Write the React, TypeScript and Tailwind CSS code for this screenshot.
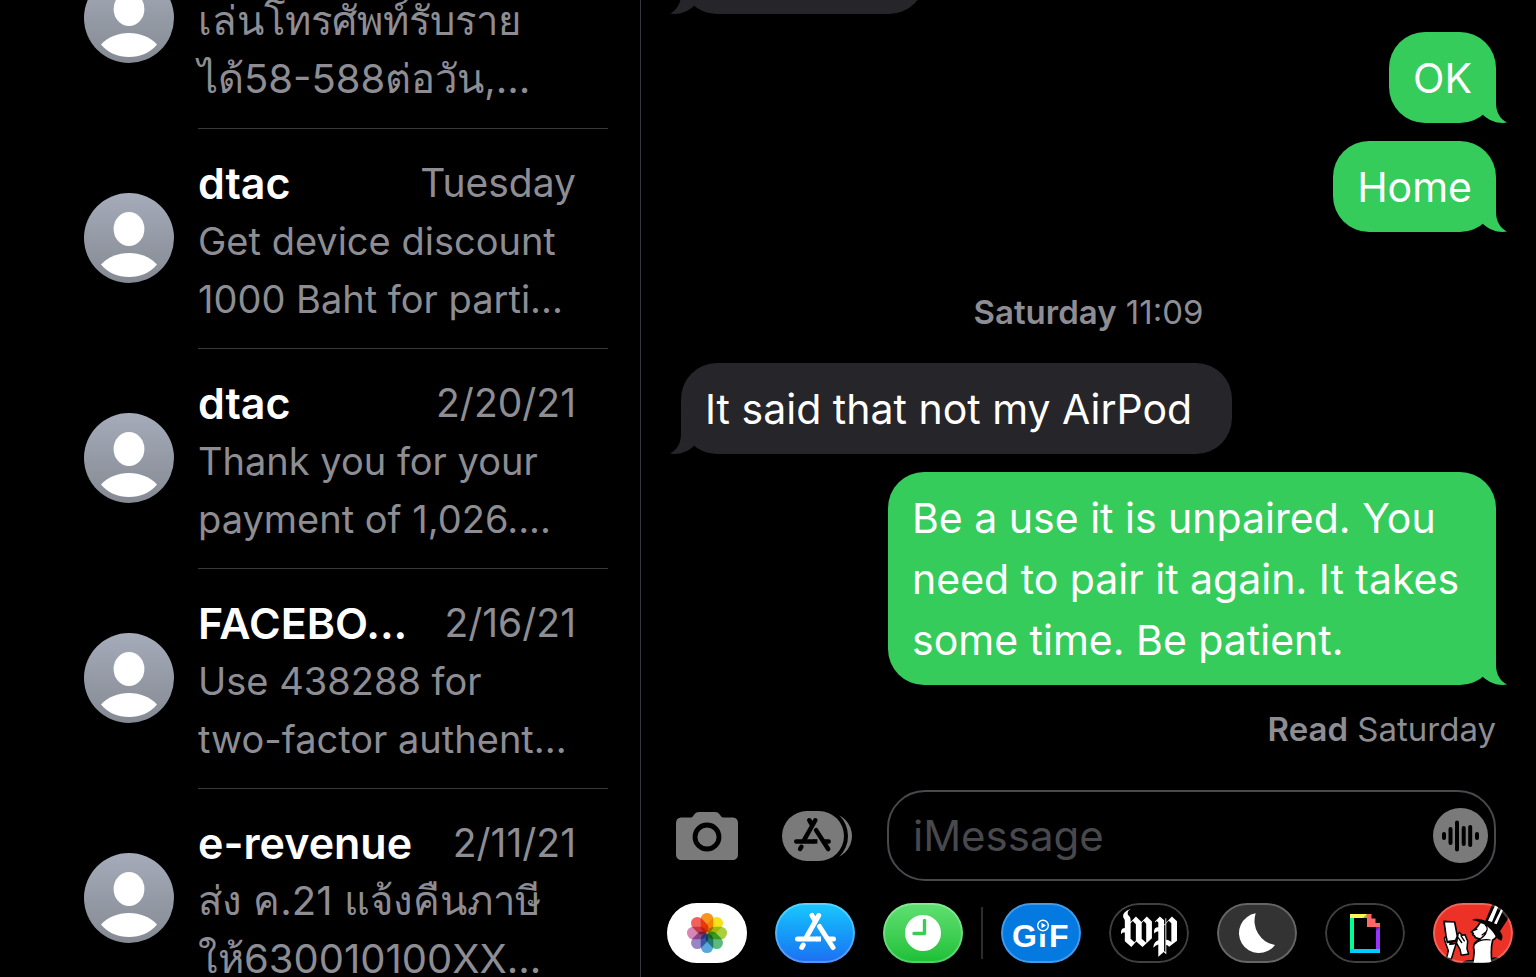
import type { ReactNode } from 'react'
import clsx from 'clsx'
import { SiThewashingtonpost } from 'react-icons/si'

type Conversation = {
  id: number
  name: string
  date: string
  preview: [string, string]
  thai?: boolean
}

const conversations: Conversation[] = [
  { id: 1, name: '', date: '', preview: ['เล่นโทรศัพท์รับราย', 'ได้58-588ต่อวัน,…'], thai: true },
  { id: 2, name: 'dtac', date: 'Tuesday', preview: ['Get device discount', '1000 Baht for parti...'] },
  { id: 3, name: 'dtac', date: '2/20/21', preview: ['Thank you for your', 'payment of 1,026....'] },
  { id: 4, name: 'FACEBO...', date: '2/16/21', preview: ['Use 438288 for', 'two-factor authent...'] },
  { id: 5, name: 'e-revenue', date: '2/11/21', preview: ['ส่ง ค.21 แจ้งคืนภาษี', 'ให้630010100XX...'], thai: true },
]

const Avatar = () => (
  <svg viewBox="0 0 90 90" className="mb-0.5 size-[90px] shrink-0" aria-hidden="true">
    <defs>
      <linearGradient id="avatar" x1="0" y1="0" x2="0" y2="1">
        <stop offset="0" stopColor="#a5abb9" />
        <stop offset="1" stopColor="#858a93" />
      </linearGradient>
    </defs>
    <circle cx="45" cy="45" r="45" fill="url(#avatar)" />
    <ellipse cx="45" cy="36" rx="15.4" ry="17" fill="#fff" />
    <path d="M17 71.5C24 64 34 60 45 60s21 4 28 11.5C66 80 56 84 45 84s-21-4-28-12.5Z" fill="#fff" />
  </svg>
)

const ConversationRow = ({ name, date, preview, thai }: Conversation) => (
  <li className="flex h-[220px] items-center gap-6 pl-[84px]">
    <Avatar />
    <a
      href="#"
      className="mr-8 flex h-full min-w-0 flex-1 flex-col justify-center border-b border-[#38383b] pt-1 pr-8"
    >
      <div className="flex h-[58px] items-center justify-between whitespace-nowrap">
        <span className="text-[43px] leading-[58px] font-semibold">{name}</span>
        <span className="text-[39px] leading-[58px] text-[#8d8d93]">{date}</span>
      </div>
      <p className={clsx('leading-[58px] whitespace-nowrap text-[#8d8d93]', thai ? 'text-[40px]' : 'text-[38px]')}>
        <span className="block h-[58px]">{preview[0]}</span>
        <span className="block h-[58px]">{preview[1]}</span>
      </p>
    </a>
  </li>
)

const Bubble = ({ sent, className, children }: { sent?: boolean; className?: string; children?: ReactNode }) => (
  <div
    className={clsx(
      'relative min-h-[91px] max-w-[608px] rounded-[36px] pt-4 pb-3.5 pl-6 text-[41px] leading-[61px]',
      sent ? 'self-end bg-[#35cc5b] pr-6' : 'self-start bg-[#26252a] pr-10',
      className,
    )}
  >
    {children}
    <svg
      viewBox="0 0 32 40"
      className={clsx(
        'absolute bottom-0 h-10 w-8',
        sent ? '-right-3 text-[#35cc5b]' : '-left-3 -scale-x-100 text-[#26252a]',
      )}
      aria-hidden="true"
    >
      <path d="M20 0v20c0 9 4 16 11 19.6C22 41 13.500 38 7 32L0 20Z" fill="currentColor" />
    </svg>
  </div>
)

const CameraIcon = () => (
  <svg viewBox="0 0 62 48" className="h-12 w-[62px]" aria-hidden="true">
    <path
      d="M6 5.500h9c2.500 0 3-5.500 8-5.500h16c5 0 5.500 5.500 8 5.500h9c4 0 6 2 6 6V42c0 4-2 6-6 6H6c-4 0-6-2-6-6V11.500c0-4 2-6 6-6Z"
      fill="#7a7a7a"
    />
    <circle cx="31" cy="25" r="12" fill="none" stroke="#000" strokeWidth="4.800" />
  </svg>
)

const StoreStrokes = () => (
  <g fill="none" stroke="currentColor" strokeWidth="5" strokeLinecap="round">
    <path d="M23.700 2.500 11.500 24M17 2.500l3 5" />
    <path d="M24.500 13.500 38 34.500" />
    <path d="M2.500 26H21M33 26h5.500" />
    <path d="M21 26h5" strokeLinecap="butt" />
    <path d="M8.200 32l-1.400 2.400" />
  </g>
)

const AppDrawerIcon = () => (
  <svg viewBox="0 0 70 50" className="h-[50px] w-[70px] text-black" aria-hidden="true">
    <rect x="12" y="2" width="58" height="46" rx="23" fill="#7a7a7a" />
    <rect x="-4" y="-4" width="70" height="58" rx="29" fill="#000" />
    <rect width="62" height="50" rx="25" fill="#7a7a7a" />
    <g transform="translate(12 7) scale(.9)">
      <StoreStrokes />
    </g>
  </svg>
)

const VoiceIcon = () => (
  <svg viewBox="0 0 55 55" className="size-[55px]" aria-hidden="true">
    <circle cx="27.500" cy="27.500" r="27.500" fill="#7a7a7a" />
    <path
      d="M11 26v4M17.500 21v14M24 14.500v27M30.700 20v16M37.200 19v18M44 26v4"
      stroke="#000"
      strokeWidth="4"
      strokeLinecap="round"
    />
  </svg>
)

const petals = ['#f7941e', '#f6e21a', '#a9cf3f', '#5cbb7c', '#5aa5dc', '#9a85c4', '#d687b5', '#f0615c']

const Photos = () => (
  <svg viewBox="0 0 80 60" className="isolate size-full">
    {petals.map((color, i) => (
      <rect
        key={color}
        x="33.700"
        y="10"
        width="12.600"
        height="19.500"
        rx="6.300"
        fill={color}
        transform={`rotate(${i * 45} 40 30)`}
        className="mix-blend-multiply"
      />
    ))}
  </svg>
)

const AppStore = () => (
  <svg viewBox="0 0 80 60" className="size-full">
    <g transform="translate(20 10)">
      <StoreStrokes />
    </g>
  </svg>
)

const Recents = () => (
  <svg viewBox="0 0 80 60" className="size-full">
    <circle cx="40" cy="30" r="18" fill="#fff" />
    <path d="M41.500 17.500v13H31" fill="none" stroke="#3ccb54" strokeWidth="3.400" strokeLinecap="round" strokeLinejoin="round" />
  </svg>
)

const Gif = () => (
  <svg viewBox="0 0 80 60" className="size-full font-['Liberation_Sans'] text-[32px] font-bold" fill="#fff">
    <text x="11" y="44">G</text>
    <text x="37" y="44">ı</text>
    <text x="48" y="44">F</text>
    <circle cx="42" cy="23" r="8" fill="#0479df" />
    <circle cx="42" cy="22.500" r="5.300" fill="none" stroke="#fff" strokeWidth="1.400" />
    <path d="m40.500 19.800 4.500 2.700-4.500 2.700Z" />
  </svg>
)

const Moon = () => (
  <svg viewBox="0 0 80 60" className="size-full">
    <path d="M38.700 10.300A20 20 0 1 0 58 42 24.500 24.500 0 0 1 38.700 10.300Z" fill="#fff" />
  </svg>
)

const Giphy = () => (
  <svg viewBox="0 0 80 60" className="size-full">
    <path d="M25 15h4v31h-4Z" fill="#00ff99" />
    <path d="M25 11h17v4H25Z" fill="#fff35c" />
    <path d="M51 24h4v22h-4Z" fill="#9933ff" />
    <path d="M25 46h30v4H25Z" fill="#00ccff" />
    <path d="M42 11h4.500v4.500h4V20H55v4H42Z" fill="#ff6666" />
    <path d="m42 11-4 4h4ZM51 28l4-4h-4Z" fill="#000" opacity=".3" />
  </svg>
)

// top-hatted gentleman looking at his phone
const Gentleman = () => (
  <svg viewBox="9 9 240 180" className="size-full" strokeLinejoin="round">
    <path d="M96 189c8-10 22-10 40-7l48-6c10-8 22-4 34 2v11ZM36 178l24-18 10 29H40Z" fill="#000" />
    <path
      d="M150 68c-4 8-12 18-26 28l6 4-2 4 5 3c2 10 10 8 18 10-14 6-22 14-20 28 4 14-1 30-3 46h58c-2-20-5-44 2-71 10-4 14-12 12-22-4-16-14-26-30-32Z"
      fill="#fff"
      stroke="#000"
      strokeWidth="5"
    />
    <path d="M151 116c8-5 15-11 18-20M135 132c10-10 26-15 47-12M165 74c8 6 9 15 2 23l-12 9" fill="none" stroke="#000" strokeWidth="3.500" />
    <path d="M131 91l11-4" stroke="#000" strokeWidth="5" />
    <path
      d="M126 60c12-8 28-2 40 2l22-52h20l38 28-36 56c8 10 10 18 4 28-8-2-14-8-20-18-12-20-32-36-68-44Z"
      fill="#000"
    />
    <path d="m174 62 23-49 9 4-20 49ZM192 70l25-50 5 4-22 49Z" fill="#fff" />
    <path
      d="M45 112c-4 4 0 12 2 18l8 22-5 22 14 3 8-26 8-24 4-24ZM78 110l10-13 8 9 9-2 8 20-2 22 5 16-22 4-4-18-10-18-20 2Z"
      fill="#fff"
      stroke="#000"
      strokeWidth="4.500"
    />
    <path d="m42 64 32 2 8 42-6 16-24 3-4-20Z" fill="#fff" stroke="#000" strokeWidth="5" />
    <path d="m53 124 23-3M84 112l12 17M92 106l12 18M58 133l16-2" fill="none" stroke="#000" strokeWidth="4" />
  </svg>
)

const Chip = ({ label, className, children }: { label: string; className: string; children: ReactNode }) => (
  <button
    aria-label={label}
    className={clsx('relative flex h-[60px] w-20 shrink-0 items-center justify-center overflow-hidden rounded-full', className)}
  >
    {children}
    <span className="absolute inset-0 rounded-full border-2 border-white/25" />
  </button>
)

export default function App() {
  return (
    <div className="flex h-screen overflow-hidden bg-black font-['Inter','Noto_Sans',sans-serif] text-white">
      <aside className="w-5/12 shrink-0 overflow-hidden">
        <ul className="-mt-[91px]">
          {conversations.map((c) => (
            <ConversationRow key={c.id} {...c} />
          ))}
        </ul>
      </aside>

      <main className="flex min-w-0 flex-1 flex-col overflow-hidden border-l border-[#38383b]">
        <section className="flex min-h-0 flex-1 flex-col overflow-hidden px-10">
          <Bubble className="-mt-[77px] w-[244px] shrink-0" />
          <Bubble sent className="mt-[18px]">OK</Bubble>
          <Bubble sent className="mt-[18px]">Home</Bubble>
          <p className="mt-[60px] text-center text-[33px] leading-10 text-[#8d8d93]">
            <span className="font-semibold">Saturday</span> 11:09
          </p>
          <Bubble className="mt-[31px]">It said that not my AirPod</Bubble>
          <Bubble sent className="mt-[18px]">
            Be a use it is unpaired. You need to pair it again. It takes some time. Be patient.
          </Bubble>
          <p className="mt-6 text-right text-[33px] leading-10 text-[#8d8d93]">
            <span className="font-semibold">Read</span> Saturday
          </p>
        </section>

        <form className="flex items-center pr-10 pl-[35px]">
          <button type="button" aria-label="Camera">
            <CameraIcon />
          </button>
          <button type="button" aria-label="Apps" className="mr-[35px] ml-11">
            <AppDrawerIcon />
          </button>
          <div className="flex h-[91px] min-w-0 flex-1 items-center rounded-[38px] border-2 border-[#48484d] pr-1.5 pl-6">
            <input
              aria-label="Message"
              placeholder="iMessage"
              className="min-w-0 flex-1 bg-transparent text-[42px] outline-none placeholder:text-[#48484d]"
            />
            <button type="button" aria-label="Record audio">
              <VoiceIcon />
            </button>
          </div>
        </form>

        <nav className="mt-[22px] mb-3.5 flex items-center gap-7 pl-[26px]">
          <Chip label="Photos" className="bg-white"><Photos /></Chip>
          <Chip label="App Store" className="bg-linear-to-b from-[#1ec8fc] to-[#1f6df2]"><AppStore /></Chip>
          <Chip label="Recents" className="bg-linear-to-b from-[#5fe072] to-[#17c035]"><Recents /></Chip>
          <span className="-mx-2.5 h-[52px] w-0.5 shrink-0 bg-[#2c2c2e]" />
          <Chip label="GIF" className="bg-[#0479df]"><Gif /></Chip>
          <Chip label="Washington Post" className="bg-black"><SiThewashingtonpost className="size-14" /></Chip>
          <Chip label="Moon" className="bg-[#333]"><Moon /></Chip>
          <Chip label="Giphy" className="bg-black"><Giphy /></Chip>
          <Chip label="Gentleman" className="bg-[#ec3227]"><Gentleman /></Chip>
        </nav>
      </main>
    </div>
  )
}
